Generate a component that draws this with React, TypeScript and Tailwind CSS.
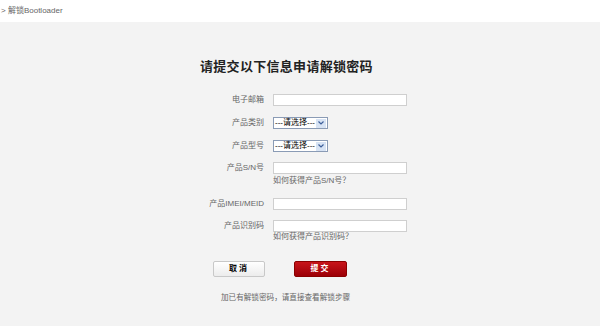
import React from "react";

const font = { fontFamily: '"Liberation Sans", "Noto Sans CJK SC", sans-serif' };

function Label({ children }: { children: React.ReactNode }) {
  return <div className="w-[64px] shrink-0 text-right text-[8px] leading-[12px] text-[#666]">{children}</div>;
}

function TextInput() {
  return <input className="h-[12px] w-[134px] border border-[#cfcfcf] bg-white outline-none" />;
}

function FakeSelect() {
  return (
    <div className="flex h-[12px] w-[55px] items-center border border-[#8a9bb5] bg-white">
      <span className="flex-1 pl-[1px] text-[8px] leading-[10px] text-black">---请选择---</span>
      <span className="mr-[1px] flex h-[9px] w-[10px] items-center justify-center bg-[#d7e3f4]">
        <svg width="6" height="4" viewBox="0 0 6 4">
          <path d="M0.5 0.5 L3 3 L5.5 0.5" fill="none" stroke="#3d5f9a" strokeWidth="1.2" />
        </svg>
      </span>
    </div>
  );
}

function Row({ label, children, className }: { label: string; children: React.ReactNode; className: string }) {
  return (
    <div className={`flex items-center gap-[9px] ${className}`}>
      <Label>{label}</Label>
      {children}
    </div>
  );
}

function Help({ text, className }: { text: string; className: string }) {
  return <div className={`pl-[73px] text-[8px] leading-[10px] text-[#666] ${className}`}>{text}</div>;
}

export default function App() {
  return (
    <div className="h-[326px] w-[600px] overflow-hidden bg-[#f3f3f3]" style={font}>
      <div className="flex h-[22px] items-center bg-white pl-[1px] text-[8px] text-[#666]">&gt; 解锁Bootloader</div>

      <div className="flex flex-col pl-[200px]">
        <div className="mt-[37px] text-[13px] font-bold leading-[16px] tracking-[0.3px] text-[#222]">请提交以下信息申请解锁密码</div>

        <Row label="电子邮箱" className="mt-[19px]">
          <TextInput />
        </Row>
        <Row label="产品类别" className="mt-[11px]">
          <FakeSelect />
        </Row>
        <Row label="产品型号" className="mt-[11px]">
          <FakeSelect />
        </Row>
        <Row label="产品S/N号" className="mt-[10px]">
          <TextInput />
        </Row>
        <Help text="如何获得产品S/N号？" className="mt-[2px]" />
        <Row label="产品IMEI/MEID" className="mt-[12px]">
          <TextInput />
        </Row>
        <Row label="产品识别码" className="mt-[10px]">
          <TextInput />
        </Row>
        <Help text="如何获得产品识别码？" className="mt-0" />

        <div className="mt-[19px] flex items-center gap-[29px] pl-[13px]">
          <button className="h-[16px] w-[52px] rounded-[2px] border border-[#c8c8c8] bg-gradient-to-b from-white to-[#ececec] text-[8px] font-bold leading-none tracking-[2px] text-black">
            取消
          </button>
          <button className="h-[16px] w-[53px] rounded-[2px] border border-[#8a0000] bg-gradient-to-b from-[#c8141a] to-[#9c0006] text-[8px] font-bold leading-none tracking-[2px] text-white">
            提交
          </button>
        </div>

        <div className="mt-[16px] pl-[21px] text-[7.6px] leading-[10px] text-[#666]">加已有解锁密码，请直接查看解锁步骤</div>
      </div>
    </div>
  );
}
